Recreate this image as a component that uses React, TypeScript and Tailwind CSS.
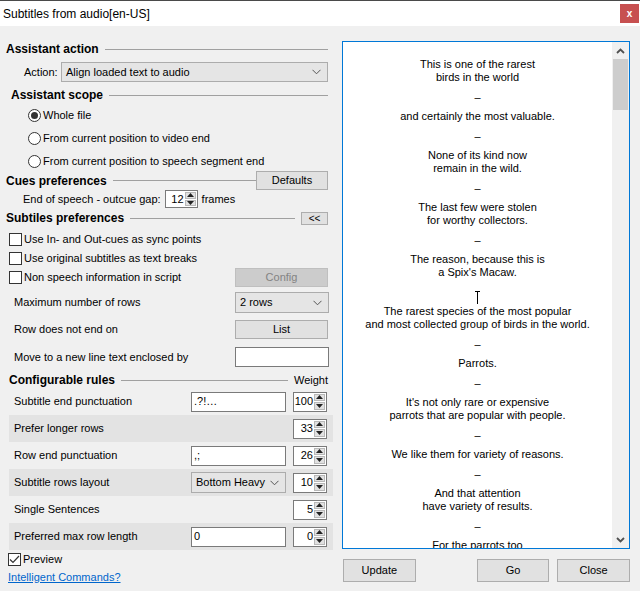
import React from 'react';

const lines: string[][] = [
    ['This is one of the rarest', 'birds in the world'],
    ['and certainly the most valuable.'],
    ['None of its kind now', 'remain in the wild.'],
    ['The last few were stolen', 'for worthy collectors.'],
    ['The reason, because this is', "a Spix's Macaw."],
    ['The rarest species of the most popular', 'and most collected group of birds in the world.'],
    ['Parrots.'],
    ["It's not only rare or expensive", 'parrots that are popular with people.'],
    ['We like them for variety of reasons.'],
    ['And that attention', 'have variety of results.'],
    ['For the parrots too'],
];

function Header({ title, className, children }: { title: string; className?: string; children?: React.ReactNode }) {
    return (
        <div className={`flex items-center h-[16px] ${className || ''}`}>
            <span className="font-bold text-[12px] whitespace-nowrap">{title}</span>
            <div className="flex-1 h-px bg-[#a0a0a0] ml-[6px]" />
            {children}
        </div>
    );
}

function Chevron() {
    return (
        <svg width="9" height="6" viewBox="0 0 9 6" className="shrink-0">
            <path d="M0.5 0.8 L4.5 4.8 L8.5 0.8" fill="none" stroke="#555" strokeWidth="1" />
        </svg>
    );
}

function Select({ value, className }: { value: string; className: string }) {
    return (
        <div className={`flex items-center border border-[#acacac] bg-[#e5e5e5] pl-[4px] pr-[6px] ${className}`}>
            <span className="flex-1 whitespace-nowrap">{value}</span>
            <Chevron />
        </div>
    );
}

function Button({ label, className, disabled }: { label: string; className: string; disabled?: boolean }) {
    return (
        <div
            className={`flex items-center justify-center border ${
                disabled ? 'bg-[#cccccc] border-[#bfbfbf] text-[#838383]' : 'bg-[#e1e1e1] border-[#adadad]'
            } ${className}`}
        >
            {label}
        </div>
    );
}

function Spin({ value, className }: { value: string; className: string }) {
    return (
        <div className={`flex border border-[#7a7a7a] bg-white ${className}`}>
            <div className="flex-1 flex items-center justify-end pr-[1px]">{value}</div>
            <div className="flex flex-col w-[12px] py-[1px] pr-[1px] gap-[1px]">
                <div className="flex-1 flex items-center justify-center bg-[#e1e1e1] border border-[#b8b8b8]">
                    <svg width="7" height="4" viewBox="0 0 7 4">
                        <path d="M0 4 L3.5 0 L7 4 Z" fill="#222" />
                    </svg>
                </div>
                <div className="flex-1 flex items-center justify-center bg-[#e1e1e1] border border-[#b8b8b8]">
                    <svg width="7" height="4" viewBox="0 0 7 4">
                        <path d="M0 0 L3.5 4 L7 0 Z" fill="#222" />
                    </svg>
                </div>
            </div>
        </div>
    );
}

function Radio({ label, checked }: { label: string; checked?: boolean }) {
    return (
        <div className="flex items-center pl-[22px] gap-[2px] h-[19px]">
            <div className="w-[13px] h-[13px] rounded-full border border-[#333] bg-white flex items-center justify-center">
                {checked && <div className="w-[7px] h-[7px] rounded-full bg-[#333]" />}
            </div>
            <span>{label}</span>
        </div>
    );
}

function Check({ label, checked }: { label: string; checked?: boolean }) {
    return (
        <div className="flex items-center gap-[2px]">
            <div className="w-[13px] h-[13px] border border-[#333] bg-white flex items-center justify-center">
                {checked && (
                    <svg width="11" height="9" viewBox="0 0 11 9">
                        <path d="M1 4.5 L4 7.5 L10 1" fill="none" stroke="#333" strokeWidth="1.2" />
                    </svg>
                )}
            </div>
            <span className="whitespace-nowrap">{label}</span>
        </div>
    );
}

function Rule({
    label,
    weight,
    shaded,
    children,
}: {
    label: string;
    weight: string;
    shaded?: boolean;
    children?: React.ReactNode;
}) {
    return (
        <div className={`flex items-center h-[27px] pl-[5px] pr-[6px] ${shaded ? 'bg-[#e3e3e3]' : ''}`}>
            <span className="flex-1 whitespace-nowrap">{label}</span>
            {children}
            <Spin value={weight} className="w-[34px] h-[20px] ml-[7px]" />
        </div>
    );
}

export default function App() {
    return (
        <div className="w-[640px] h-[591px] bg-[#f0f0f0] border-t border-[#4a4a4a] overflow-hidden font-['Liberation_Sans',Arial,sans-serif] text-[11px] text-black">
            <div className="h-[25px] bg-white flex items-center justify-between pl-[3px]">
                <span className="text-[12px]">Subtitles from audio[en-US]</span>
                <div className="w-[19px] h-[19px] mr-[1px] bg-[#c75050] text-white font-bold text-[10px] flex items-center justify-center leading-none">
                    x
                </div>
            </div>

            <div className="flex">
                <div className="w-[328px] ml-[6px] pt-[15px] flex flex-col">
                    <Header title="Assistant action" className="pr-[6px]" />
                    <div className="flex items-center h-[20px] mt-[5px] pl-[18px] pr-[6px]">
                        <span className="w-[37px]">Action:</span>
                        <Select value="Align loaded text to audio" className="flex-1 h-[20px]" />
                    </div>

                    <Header title="Assistant scope" className="mt-[5px] pl-[5px] pr-[6px]" />
                    <div className="mt-[3px] flex flex-col gap-[4px]">
                        <Radio label="Whole file" checked />
                        <Radio label="From current position to video end" />
                        <Radio label="From current position to speech segment end" />
                    </div>

                    <Header title="Cues preferences" className="h-[19px] pr-[6px]">
                        <Button label="Defaults" className="w-[72px] h-[19px]" />
                    </Header>
                    <div className="flex items-center h-[18px] pl-[17px] gap-[4px]">
                        <span>End of speech - outcue gap:</span>
                        <Spin value="12" className="w-[33px] h-[18px]" />
                        <span>frames</span>
                    </div>

                    <Header title="Subtiles preferences" className="mt-[2px] pr-[6px]">
                        <Button label="<<" className="w-[27px] h-[13px] ml-[6px] text-[10px]" />
                    </Header>
                    <div className="mt-[4px] pl-[3px] pr-[6px] flex flex-col">
                        <div className="h-[19px] flex items-center">
                            <Check label="Use In- and Out-cues as sync points" />
                        </div>
                        <div className="h-[19px] flex items-center">
                            <Check label="Use original subtitles as text breaks" />
                        </div>
                        <div className="h-[19px] flex items-center justify-between">
                            <Check label="Non speech information in script" />
                            <Button label="Config" disabled className="w-[93px] h-[19px]" />
                        </div>
                    </div>

                    <div className="mt-[5px] h-[21px] flex items-center justify-between pl-[8px] pr-[5px]">
                        <span>Maximum number of rows</span>
                        <Select value="2 rows" className="w-[94px] h-[21px]" />
                    </div>
                    <div className="mt-[7px] h-[19px] flex items-center justify-between pl-[8px] pr-[6px]">
                        <span>Row does not end on</span>
                        <Button label="List" className="w-[93px] h-[19px]" />
                    </div>
                    <div className="mt-[8px] h-[20px] flex items-center justify-between pl-[8px] pr-[5px]">
                        <span>Move to a new line text enclosed by</span>
                        <div className="w-[94px] h-[20px] border border-[#7a7a7a] bg-white" />
                    </div>

                    <Header title="Configurable rules" className="mt-[5px] h-[12px] pl-[3px] pr-[6px]">
                        <span className="ml-[6px]">Weight</span>
                    </Header>
                    <div className="ml-[3px] w-[324px] flex flex-col">
                        <Rule label="Subtitle end punctuation" weight="100">
                            <div className="w-[95px] h-[20px] border border-[#7a7a7a] bg-white pl-[2px] flex items-center">.?!…</div>
                        </Rule>
                        <Rule label="Prefer longer rows" weight="33" shaded />
                        <Rule label="Row end punctuation" weight="26">
                            <div className="w-[95px] h-[20px] border border-[#7a7a7a] bg-white pl-[2px] flex items-center">,;</div>
                        </Rule>
                        <Rule label="Subtitle rows layout" weight="10" shaded>
                            <Select value="Bottom Heavy" className="w-[95px] h-[21px]" />
                        </Rule>
                        <Rule label="Single Sentences" weight="5" />
                        <Rule label="Preferred max row length" weight="0" shaded>
                            <div className="w-[95px] h-[20px] border border-[#7a7a7a] bg-white pl-[2px] flex items-center">0</div>
                        </Rule>
                    </div>

                    <div className="h-[18px] flex items-center pl-[2px]">
                        <Check label="Preview" checked />
                    </div>
                    <div className="h-[18px] flex items-center pl-[2px]">
                        <span className="text-[#0066cc] underline">Intelligent Commands?</span>
                    </div>
                </div>

                <div className="ml-[8px] w-[288px] pt-[15px] flex flex-col">
                    <div className="relative h-[508px] border border-[#0078d7] bg-white flex">
                        <div className="flex-1 overflow-hidden pt-[16px] flex flex-col items-center gap-[6.5px] leading-[13px] text-center">
                            {lines.map((block, i) => (
                                <React.Fragment key={i}>
                                    {i > 0 && <div className={i === 5 ? 'invisible' : ''}>–</div>}
                                    <div>
                                        {block.map((l) => (
                                            <div key={l} className="whitespace-nowrap">
                                                {l}
                                            </div>
                                        ))}
                                    </div>
                                </React.Fragment>
                            ))}
                        </div>
                        <div className="w-[17px] bg-[#f0f0f0] flex flex-col">
                            <div className="h-[17px] flex items-center justify-center">
                                <svg width="9" height="6" viewBox="0 0 9 6">
                                    <path d="M1 5 L4.5 1.5 L8 5" fill="none" stroke="#505050" strokeWidth="1.8" />
                                </svg>
                            </div>
                            <div className="h-[51px] mx-[1px] bg-[#cdcdcd]" />
                            <div className="flex-1" />
                            <div className="h-[17px] flex items-center justify-center">
                                <svg width="9" height="6" viewBox="0 0 9 6">
                                    <path d="M1 1 L4.5 4.5 L8 1" fill="none" stroke="#505050" strokeWidth="1.8" />
                                </svg>
                            </div>
                        </div>
                        <svg width="7" height="14" viewBox="0 0 7 14" className="absolute left-[131px] top-[249px]">
                            <path d="M1 0.5 H6 M3.5 0.5 V13" fill="none" stroke="#000" strokeWidth="1" />
                        </svg>
                    </div>
                    <div className="mt-[10px] flex items-center">
                        <Button label="Update" className="w-[73px] h-[23px] ml-[1px]" />
                        <Button label="Go" className="w-[73px] h-[23px] ml-[61px]" />
                        <Button label="Close" className="w-[73px] h-[23px] ml-[8px]" />
                    </div>
                </div>
            </div>
        </div>
    );
}
